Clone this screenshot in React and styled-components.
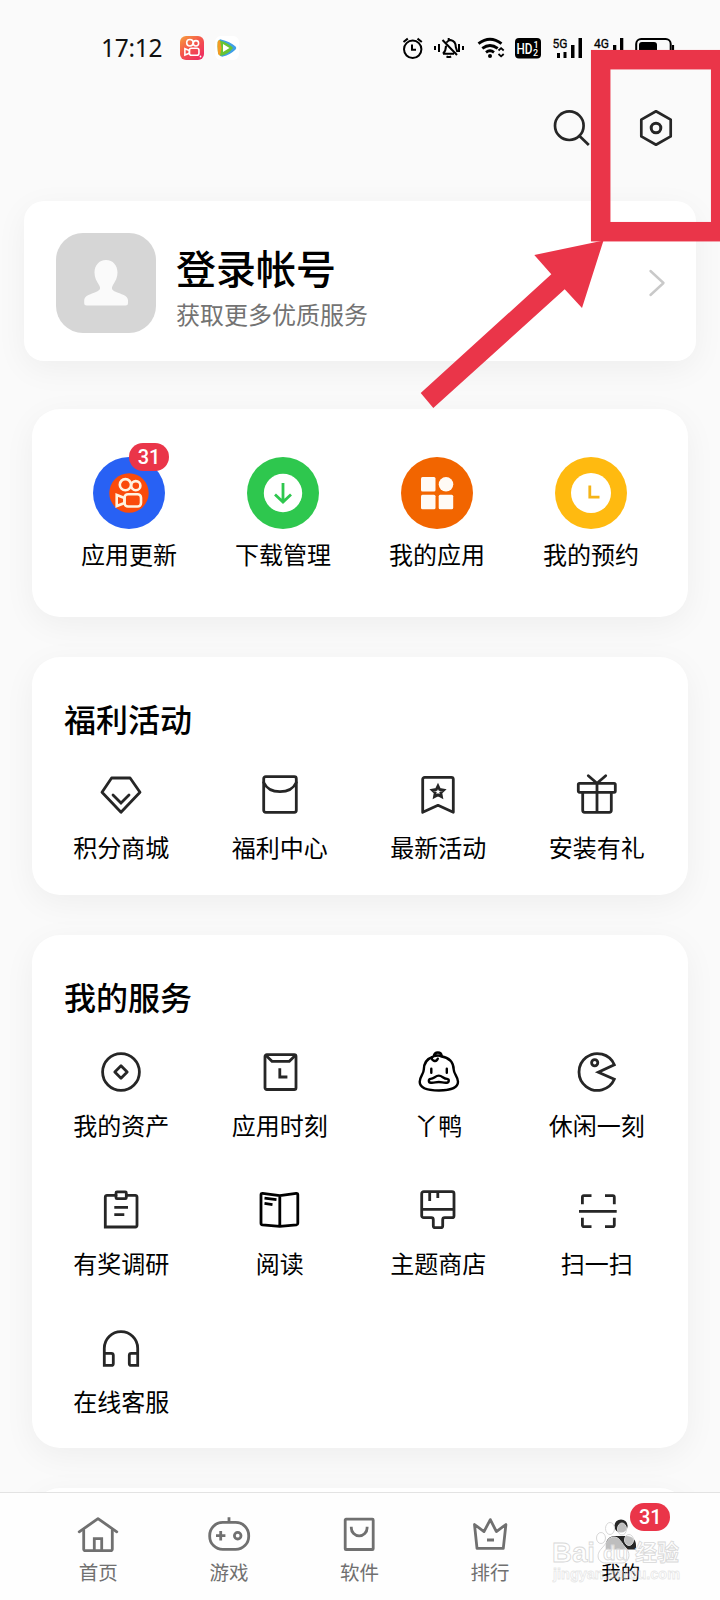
import React from "react";
import styled, { createGlobalStyle, css } from "styled-components";

const ink = "#262626";

const icons = {
  points: (
    <>
      <path d="M14.6 8H33.1L43 22.3 24 42.2 5 22.3Z" />
      <path d="M16 25l8 8 8-8" strokeLinejoin="miter" />
    </>
  ),
  envelope: (
    <>
      <rect x="7.7" y="6.7" width="32.6" height="35.6" rx="2" />
      <path d="M7.7 12.5Q12 21.7 24 21.7T40.3 12.5" />
    </>
  ),
  bookmark: (
    <>
      <path d="M8.7 42.3V9.3a2 2 0 0 1 2-2h26.6a2 2 0 0 1 2 2v33L24 35.3Z" />
      <path
        d="M24 16l1.7 3.500 3.900.600-2.800 2.700.700 3.900-3.500-1.900-3.500 1.900.700-3.900-2.800-2.700 3.900-.600Z"
        strokeLinejoin="miter"
      />
    </>
  ),
  gift: (
    <>
      <rect x="5.3" y="13.3" width="37" height="9" rx="1.2" />
      <path d="M9.7 22.3V40.3a2 2 0 0 0 2 2h24.6a2 2 0 0 0 2-2V22.3M24 13.3v29M15.3 5.7l8.7 7.6 8.7-7.6" />
    </>
  ),
  coin: (
    <>
      <circle cx="24" cy="24" r="18.4" />
      <path d="M24 17.8l6.2 6.2-6.2 6.2-6.2-6.2Z" />
    </>
  ),
  moment: (
    <>
      <rect x="9" y="6.7" width="31" height="34.8" rx="1.8" />
      <path d="M10.3 7.8l5.7 5.5h17.3l5.7-5.5M23.8 20.3v8.7h7.6" strokeLinejoin="miter" strokeLinecap="butt" />
    </>
  ),
  duck: (
    <g stroke="#000" strokeWidth="2.400">
      <path d="M18.500 9C12.500 11 10 15 9.800 21.500 9.700 26 5.700 28.500 5.700 33.800 5.700 40 14 42.500 25 42.500S44 40 44 33.800c0-5.300-4.200-7.800-4.300-12.300C39.500 14 34.500 9.500 27 8.200" />
      <path d="M19.700 8.200C20.600 3.300 27 3.300 27.700 7.800M18 9.200c-1.500 3.500 4.500 5.500 5.800 1.500M19.700 8.200q4-1.400 8-.2" />
      <path d="M17.300 20.800v4M32.800 20.800v4" />
      <path d="M24.800 27.600c3.500 0 4.500 3.200 8.300 3.300 2.500.4 2 3.700-.3 3.800-3.800.3-4.500-.7-8-.7s-4.200 1-8 .7c-2.500-.2-2.600-3.500-.2-3.800 3.700-.3 4.700-3.300 8.200-3.300Z" />
    </g>
  ),
  pacman: (
    <>
      <path d="M41.3 16.700A18.400 18.400 0 1 0 41.300 31.300L25.300 24.200Z" strokeLinejoin="miter" />
      <circle cx="21.700" cy="14.700" r="3.100" />
    </>
  ),
  survey: (
    <>
      <path d="M19 9.300H10a1.700 1.700 0 0 0-1.700 1.700V41H38.300a1.700 1.700 0 0 0 1.700-1.700V11a1.700 1.700 0 0 0-1.700-1.700H29.300" strokeLinejoin="miter" />
      <rect x="19" y="5.900" width="10.300" height="6.800" rx="1" />
      <path d="M17.300 21.400H31M17.300 28.700h10" strokeLinecap="butt" />
    </>
  ),
  book: (
    <g stroke="#000">
      <path d="M23.800 9.600L6.600 7.300Q5 7.200 5 8.700V37.300Q5 38.700 6.500 38.900L23.800 40.300 40.400 38.900Q41.800 38.700 41.800 37.300V8.700Q41.800 7.200 40.200 7.300ZV40" />
      <path d="M8.500 12.200l12 1.500M8.500 17.400l8 1.200" strokeLinecap="butt" />
    </g>
  ),
  brush: (
    <>
      <path d="M9.700 5.700H38a2 2 0 0 1 2 2V29.700a2 2 0 0 1-2 2H30.700a2 2 0 0 0-2 2V39.700a2 2 0 0 1-2 2H21.300a2 2 0 0 1-2-2V33.700a2 2 0 0 0-2-2H9.700a2 2 0 0 1-2-2V7.700a2 2 0 0 1 2-2Z" />
      <path d="M7.700 23.400H40M15.700 6v9M23.800 6v6" strokeLinecap="butt" />
    </>
  ),
  scan: (
    <path
      d="M9.400 18.300V11.200a1.500 1.500 0 0 1 1.500-1.500H18.500M32 9.700H39.800a1.500 1.500 0 0 1 1.500 1.500V18.300M41.300 31.700V39.200a1.500 1.500 0 0 1-1.500 1.500H32M18.500 40.700H10.900a1.500 1.500 0 0 1-1.500-1.500V31.700M6 25.300H43.700"
      strokeLinecap="butt"
    />
  ),
  headset: (
    <path
      d="M7.300 29.300V24.300A16.700 16.700 0 0 1 40.700 24.300V29.300M7.300 29.300H14.300a2 2 0 0 1 2 2V39.400a2 2 0 0 1-2 2H7.300ZM40.700 29.300H34.300a2 2 0 0 0-2 2V39.400a2 2 0 0 0 2 2H40.700Z"
      strokeLinejoin="miter"
    />
  ),
  home: (
    <>
      <path d="M5.200 21.800L24 8.700 42.800 21.800" />
      <path d="M9.700 20V39.200a1.500 1.500 0 0 0 1.500 1.500H36.800a1.500 1.500 0 0 0 1.500-1.500V20M20.300 40.500V28.700h7.400V40.500" strokeLinejoin="miter" />
    </>
  ),
  game: (
    <>
      <rect x="4.700" y="12.400" width="39" height="27" rx="13" />
      <path d="M24 7.300v5M11 25.700h9.400M15.700 21v9.400" strokeLinecap="butt" />
      <circle cx="32.700" cy="25.700" r="3.300" />
    </>
  ),
  software: (
    <>
      <rect x="10.200" y="9.200" width="28" height="30.300" rx="0.800" />
      <path d="M16.300 16.700v1.200a7.900 7.900 0 0 0 15.800 0V16.700" strokeLinecap="butt" />
    </>
  ),
  rank: (
    <path d="M8.500 14.500L18 21.600 24.300 9.600 30.400 21.600 39.900 14.500 37.300 38.400H11ZM21 30h7" strokeLinecap="butt" />
  ),
  mine: (
    <g fill={ink} stroke="none">
      <circle cx="24" cy="16" r="6.600" />
      <path d="M8.700 39.400V35c0-5 4-9 9-9H30c5 0 9 4 9 9v4.400Z" />
    </g>
  ),
};

const welfare = [
  ["points", "积分商城"],
  ["envelope", "福利中心"],
  ["bookmark", "最新活动"],
  ["gift", "安装有礼"],
];

const services = [
  ["coin", "我的资产"],
  ["moment", "应用时刻"],
  ["duck", "丫鸭"],
  ["pacman", "休闲一刻"],
  ["survey", "有奖调研"],
  ["book", "阅读"],
  ["brush", "主题商店"],
  ["scan", "扫一扫"],
  ["headset", "在线客服"],
];

const tabs = [
  { icon: "home", label: "首页" },
  { icon: "game", label: "游戏" },
  { icon: "software", label: "软件" },
  { icon: "rank", label: "排行" },
  { icon: "mine", label: "我的", active: true, badge: 31 },
];

function LineIcon({ name }) {
  return <IconSvg viewBox="0 0 48 48">{icons[name]}</IconSvg>;
}

function Camera() {
  return (
    <>
      <circle cx="-3.600" cy="-8.300" r="5.600" />
      <circle cx="6.800" cy="-7.300" r="4.600" />
      <rect x="-4.500" y="1.200" width="16.500" height="12.300" rx="3.500" />
      <path d="M-4.500 5L-12.300 2V13L-4.500 10Z" />
    </>
  );
}

function StatusBar() {
  return (
    <Status>
      <Clock>17:12</Clock>
      <svg width="24" height="24" viewBox="0 0 24 24">
        <defs>
          <linearGradient id="ks" x1="0" y1="0" x2="0.8" y2="1">
            <stop offset="0" stopColor="#f7a03c" />
            <stop offset="0.5" stopColor="#f4564c" />
            <stop offset="1" stopColor="#ee2b61" />
          </linearGradient>
        </defs>
        <rect width="24" height="24" rx="6" fill="url(#ks)" />
        <g transform="translate(12 11.500) scale(.58)" fill="none" stroke="#fff" strokeWidth="2.700">
          <Camera />
        </g>
        <circle cx="20.500" cy="20.500" r="0.900" fill="#fff" />
      </svg>
      <VideoLogo width="24" height="24" viewBox="0 0 24 24">
        <rect width="24" height="24" rx="6" fill="#fff" />
        <path d="M4 5q0-2 2-1.600 9 2 14.600 7.200 1.400 1.400 0 2.800Q15 18.800 8 20.600 5 21 4.200 18 3 11 4 5Z" fill="#3f9fe6" />
        <path d="M2.700 6Q3 4 5 4.400q8 2 13 7.600Q13 18.600 6.400 19.700 3.600 20 3 17 2.200 11 2.700 6Z" fill="#67c434" />
        <path d="M2.700 6Q3 4 5 4.400L6.500 12 5 19.500Q3.400 19 3 17 2.200 11 2.700 6Z" fill="#f59a23" />
        <path d="M8 8l6.500 4-6.500 4Z" fill="#fff" />
      </VideoLogo>
      <Spacer />
      <Signals width="282" height="24" viewBox="393 36 282 24">
        <g fill="none" stroke="#000" strokeWidth="2">
          <circle cx="412.700" cy="49.300" r="8.700" />
          <path d="M412 44.500v5.300h4M403.500 42l4.300-3.400M421.800 42l-4.300-3.400" />
          <path d="M435 46v4M439 44v8M459 44v8M463 46v4M442.500 40l14.500 15M443 53.700h11M443 53.700q3-3 3-8M446.500 42.500q2-2.500 4-2.500 5.300 1 5.300 7l1.600 5M448.700 38v2M446.500 56.300q2.300 1.500 4.600 0" />
          <path d="M478.500 43.700q11.500-8.800 23 0M482.300 48.300q7.700-5.700 15.400 0M486 52.300q4-2.900 8 0" strokeWidth="2.900" />
          <path d="M498.500 50.500l2.600-2.400 2.600 2.400M498.500 54l2.600 2.400 2.600-2.400" strokeWidth="1.800" />
          <rect x="636.200" y="39" width="34.500" height="19" rx="5" />
          <path d="M673 45v7" strokeWidth="2.200" />
        </g>
        <circle cx="490" cy="56" r="2" />
        <rect x="515" y="38" width="26" height="20.500" rx="4" />
        <rect x="639" y="42" width="18" height="14" rx="3" />
        <g fill="#fff" fontFamily="Roboto, sans-serif" fontWeight="500">
          <text x="516.500" y="53.500" fontSize="15" textLength="16" lengthAdjust="spacingAndGlyphs">HD</text>
          <text x="533.500" y="47.500" fontSize="9">1</text>
          <text x="533" y="56.300" fontSize="9">2</text>
        </g>
        <g fontFamily="Roboto, sans-serif" fontSize="13.500" fontWeight="400" stroke="#000" strokeWidth="0.300">
          <text x="552.500" y="48" textLength="15" lengthAdjust="spacingAndGlyphs">5G</text>
          <text x="594" y="48" textLength="15" lengthAdjust="spacingAndGlyphs">4G</text>
        </g>
        <path d="M557 53h3v5h-3zM563.500 52h3v6h-3zM571 45h3.500v13h-3.500zM578.500 38h3.500v20h-3.500zM613 45h3.300v13h-3.300zM620 38h3.300v20h-3.300z" />
      </Signals>
    </Status>
  );
}

function IconGrid({ items }) {
  return (
    <Grid>
      {items.map(([icon, label]) => (
        <GridItem key={label}>
          <LineIcon name={icon} />
          <span>{label}</span>
        </GridItem>
      ))}
    </Grid>
  );
}

function Watermark() {
  return (
    <WatermarkLayer viewBox="545 1515 145 70" width="145" height="70">
      <g fill="#fff" fillOpacity="0.7" stroke="#d8d8d8" strokeWidth="1">
        <ellipse cx="601" cy="1538" rx="4.500" ry="5.500" />
        <ellipse cx="610" cy="1528.500" rx="4.500" ry="6" />
        <ellipse cx="622" cy="1529" rx="4.500" ry="6" />
        <ellipse cx="629" cy="1540" rx="4.500" ry="5.500" />
        <path d="M614 1537c6 0 7 6 12 11 6 7 2 15-4 15h-16c-8 0-11-8-4-15 5-5 6-11 12-11Z" />
        <g fontFamily="'Liberation Sans', 'Noto Sans CJK SC', sans-serif" fontWeight="700" strokeWidth="0.800">
          <text x="552" y="1562" fontSize="27" textLength="43" lengthAdjust="spacingAndGlyphs">Bai</text>
          <text x="603" y="1560" fontSize="20" textLength="25" lengthAdjust="spacingAndGlyphs">du</text>
          <text x="635" y="1560" fontSize="22" textLength="44" lengthAdjust="spacingAndGlyphs">经验</text>
          <text x="553" y="1579" fontSize="14" fillOpacity="0.150" strokeOpacity="0.600" textLength="127" lengthAdjust="spacingAndGlyphs">jingyan.baidu.com</text>
        </g>
      </g>
    </WatermarkLayer>
  );
}

function App() {
  return (
    <>
      <GlobalStyle />
      <Screen>
        <StatusBar />
        <Toolbar>
          <svg width="40" height="40" viewBox="0 0 40 40" fill="none" stroke={ink} strokeWidth="2.700">
            <circle cx="18.300" cy="17.700" r="14.300" />
            <path d="M28.500 28l9.300 9" />
          </svg>
          <svg width="40" height="40" viewBox="0 0 40 40" fill="none" stroke={ink} strokeWidth="2.700" strokeLinejoin="round">
            <path d="M20 3.300L34.700 11.600V28.400L20 36.700 5.300 28.400V11.600Z" />
            <circle cx="20" cy="20" r="4.800" strokeWidth="3" />
          </svg>
        </Toolbar>

        <Main>
          <Profile>
            <Avatar>
              <svg width="48" height="52" viewBox="0 0 48 52" fill="#fafafa">
                <path d="M24 3c7 0 11.500 5.500 11.500 12.500 0 5-2 8.500-4.500 12.500-2 3.500-1 5 2 6.500 6 2.500 13 4 13 9V46q0 2.500-2.500 2.500H4.700Q2.200 48.500 2.200 46v-2.500c0-5 7-6.500 12.800-9 3-1.500 4-3 2-6.500-2.500-4-4.500-7.500-4.500-12.500C12.500 8.500 17 3 24 3Z" />
              </svg>
            </Avatar>
            <ProfileText>
              <h1>登录帐号</h1>
              <p>获取更多优质服务</p>
            </ProfileText>
            <svg width="18" height="32" viewBox="0 0 18 32" fill="none" stroke="#c9c9c9" strokeWidth="2.400" strokeLinecap="round" strokeLinejoin="round">
              <path d="M2.500 4L15.500 16 2.500 28" />
            </svg>
          </Profile>

          <QuickCard>
            <QuickItem>
              <Disc $color="#2861f4">
                <svg width="40" height="40" viewBox="-20 -20 40 40" fill="none" stroke="#fff3e0" strokeWidth="2.600">
                  <circle r="19.700" fill="#fa4b0b" stroke="none" />
                  <Camera />
                </svg>
                <Badge $top={-14} $left={36}>31</Badge>
              </Disc>
              <span>应用更新</span>
            </QuickItem>
            <QuickItem>
              <Disc $color="#2ec74e">
                <svg width="40" height="40" viewBox="-20 -20 40 40" fill="none" stroke="#2ec74e" strokeWidth="2.800">
                  <circle r="19.200" fill="#fff" stroke="none" />
                  <path d="M0-10V9M-8 1.500L0 9 8 1.500" />
                </svg>
              </Disc>
              <span>下载管理</span>
            </QuickItem>
            <QuickItem>
              <Disc $color="#f26500">
                <svg width="40" height="40" viewBox="-20 -20 40 40" fill="#fffaf5">
                  <rect x="-16" y="-16" width="14.500" height="14.500" rx="1.500" />
                  <circle cx="9" cy="-8.700" r="7.300" />
                  <rect x="-16" y="1.700" width="14.500" height="14.500" rx="1.500" />
                  <rect x="1.700" y="1.700" width="14.500" height="14.500" rx="1.500" />
                </svg>
              </Disc>
              <span>我的应用</span>
            </QuickItem>
            <QuickItem>
              <Disc $color="#ffba10">
                <svg width="40" height="40" viewBox="-20 -20 40 40" fill="none" stroke="#f5b417" strokeWidth="2.800">
                  <circle r="20" fill="#fff" stroke="none" />
                  <path d="M-1.200-7.500V4.200H8.500" />
                </svg>
              </Disc>
              <span>我的预约</span>
            </QuickItem>
          </QuickCard>

          <Section $height={238}>
            <SectionTitle>福利活动</SectionTitle>
            <IconGrid items={welfare} />
          </Section>

          <Section $height={513}>
            <SectionTitle>我的服务</SectionTitle>
            <IconGrid items={services} />
          </Section>

          <Section $height={120} />
        </Main>

        <TabBar>
          {tabs.map((tab) => (
            <Tab key={tab.label} $active={tab.active}>
              <LineIcon name={tab.icon} />
              {tab.badge && <Badge $top={-7} $left={33}>{tab.badge}</Badge>}
              <span>{tab.label}</span>
            </Tab>
          ))}
        </TabBar>

        <Watermark />
        <Marker width="720" height="420" viewBox="0 0 720 420">
          <rect x="600.700" y="59.700" width="120" height="172" fill="none" stroke="#ea3549" strokeWidth="19.500" />
          <path d="M603.500 240.500L534.300 255l17 19.300L420.700 393l12.600 15 131.400-118.700L582 308Z" fill="#ea3549" />
        </Marker>
      </Screen>
    </>
  );
}

export default App;

const GlobalStyle = createGlobalStyle`
  body {
    margin: 0;
    background: #fafafa;
  }
  * {
    box-sizing: border-box;
  }
`;

const card = css`
  background: #fff;
  border-radius: 28px;
  box-shadow: 0 8px 32px rgba(0, 0, 0, 0.05);
`;

const Screen = styled.div`
  position: relative;
  display: flex;
  flex-direction: column;
  width: 720px;
  height: 1600px;
  overflow: hidden;
  background: #fafafa;
  color: #000;
  font-family: "Noto Sans CJK SC", sans-serif;
`;

const Status = styled.div`
  display: flex;
  flex: none;
  align-items: center;
  height: 96px;
  padding: 0 45px 0 101px;
`;

const Clock = styled.div`
  width: 79px;
  color: #111;
  font-family: "Noto Sans", sans-serif;
  font-size: 24.5px;
  line-height: 32px;
  letter-spacing: -0.3px;
  padding-bottom: 1px;
`;

const VideoLogo = styled.svg`
  margin-left: 11px;
`;

const Spacer = styled.div`
  flex: 1;
`;

const Signals = styled.svg`
  flex: none;
`;

const Toolbar = styled.div`
  display: flex;
  flex: none;
  justify-content: flex-end;
  align-items: center;
  gap: 45px;
  height: 64px;
  padding-right: 44px;
`;

const Main = styled.main`
  display: flex;
  flex: 1;
  flex-direction: column;
  gap: 40px;
  min-height: 0;
  padding: 41px 32px 0;
  overflow: hidden;
`;

const Profile = styled.section`
  ${card}
  display: flex;
  flex: none;
  align-items: center;
  height: 160px;
  margin: 0 -8px 8px;
  padding: 4px 30px 0 32px;
  border-radius: 20px;
`;

const Avatar = styled.div`
  display: flex;
  justify-content: center;
  align-items: center;
  width: 100px;
  height: 100px;
  border-radius: 27px;
  background: #d6d6d6;
`;

const ProfileText = styled.div`
  flex: 1;
  padding: 7px 0 0 20px;

  > h1 {
    margin: 0;
    font-size: 40px;
    font-weight: 500;
    line-height: 52px;
  }

  > p {
    margin: 3px 0 0;
    color: #737373;
    font-size: 24px;
    font-weight: 400;
    line-height: 36px;
  }
`;

const QuickCard = styled.section`
  ${card}
  display: grid;
  flex: none;
  grid-template-columns: repeat(4, 154px);
  justify-content: center;
  height: 208px;
  padding-top: 48px;
`;

const QuickItem = styled.div`
  display: flex;
  flex-direction: column;
  align-items: center;
  gap: 7px;
  font-size: 24px;
  font-weight: 400;
  line-height: 36px;
`;

const Disc = styled.div`
  position: relative;
  display: flex;
  justify-content: center;
  align-items: center;
  width: 72px;
  height: 72px;
  border-radius: 50%;
  background: ${(props) => props.$color};
`;

const Badge = styled.div`
  position: absolute;
  top: ${(props) => props.$top}px;
  left: ${(props) => props.$left}px;
  width: 40px;
  height: 28px;
  border-radius: 14px;
  background: #ea3549;
  color: #fff;
  font-family: Roboto, sans-serif;
  font-size: 20px;
  font-weight: 500;
  line-height: 28px;
  text-align: center;
`;

const Section = styled.section`
  ${card}
  flex: none;
  height: ${(props) => props.$height}px;
  padding: 37px 12px 0 10px;
`;

const SectionTitle = styled.h2`
  margin: 0 0 28px 22px;
  font-size: 32px;
  font-weight: 500;
  line-height: 48px;
`;

const Grid = styled.div`
  display: grid;
  grid-template-columns: repeat(4, 1fr);
  row-gap: 35px;
`;

const IconSvg = styled.svg`
  width: 48px;
  height: 48px;
  fill: none;
  stroke: currentColor;
  stroke-width: 2.8;
  stroke-linecap: round;
  stroke-linejoin: round;
`;

const GridItem = styled.div`
  display: flex;
  flex-direction: column;
  align-items: center;
  gap: 11px;
  height: 103px;
  font-size: 24px;
  font-weight: 400;
  line-height: 36px;

  > svg {
    flex: none;
    color: ${ink};
  }
`;

const TabBar = styled.nav`
  display: flex;
  flex: none;
  height: 108px;
  padding: 17px 34px 0 33px;
  border-top: 1px solid #e3e3e3;
  background: #fefefe;
`;

const Tab = styled.div`
  position: relative;
  display: flex;
  flex: 1;
  flex-direction: column;
  align-items: center;
  color: ${(props) => (props.$active ? "#000" : "#707070")};
  font-size: 19.5px;
  font-weight: 400;
  line-height: 28px;

  > ${Badge} {
    margin-left: 42px;
  }
`;

const WatermarkLayer = styled.svg`
  position: absolute;
  top: 1515px;
  left: 545px;
`;

const Marker = styled.svg`
  position: absolute;
  top: 0;
  left: 0;
`;
